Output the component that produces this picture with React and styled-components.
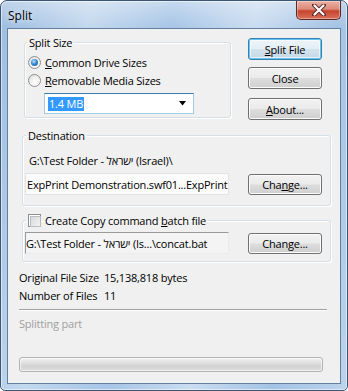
import React from 'react';
import styled, { createGlobalStyle, css } from 'styled-components';

const Global = createGlobalStyle`
  html, body { margin: 0; padding: 0; background: #ffffff; }
  body { font-family: "Open Sans", "DejaVu Sans", sans-serif; font-size: 11px; letter-spacing: -0.2px; color: #000; }
  * { box-sizing: border-box; }
`;

const Window = styled.div`
  width: 348px;
  height: 391px;
  display: flex;
  flex-direction: column;
  padding: 0 6px 6px 6px;
  border: 1px solid #3b5675;
  border-radius: 7px 7px 5px 5px;
  box-shadow: inset 0 0 0 1px rgba(255, 255, 255, 0.55);
  background:
    linear-gradient(180deg, rgba(255,255,255,0.35) 0px, rgba(255,255,255,0) 26px),
    linear-gradient(100deg, #9dbde0 0%, #c3d8ee 22%, #a7c5e6 42%, #cadcf0 62%, #a4c3e4 82%, #bcd3eb 100%);
  overflow: hidden;
`;

const TitleBar = styled.div`
  height: 27px;
  display: flex;
  align-items: flex-start;
  justify-content: space-between;
`;

const Title = styled.span`
  margin: 7px 0 0 1px;
  font-size: 12px;
  line-height: 15px;
  letter-spacing: 0;
  color: #000;
  text-shadow: 0 0 6px rgba(255,255,255,0.9);
`;

const CloseBtn = styled.div`
  width: 45px;
  height: 19px;
  border: 1px solid #5b2a26;
  border-top: none;
  border-radius: 0 0 5px 5px;
  background: linear-gradient(180deg, #ebb0a4 0%, #dc8b7a 45%, #c8432d 55%, #d9705a 100%);
  box-shadow: inset 0 0 0 1px rgba(255,255,255,0.35);
  display: flex;
  align-items: center;
  justify-content: center;
`;

const Client = styled.div`
  flex: 1;
  background: #f0f0f0;
  border: 1px solid #62809f;
  padding: 6px 8px 0 11px;
  display: flex;
  flex-direction: column;
`;

const TopRow = styled.div`
  display: flex;
  align-items: flex-start;
`;

const Group = styled.fieldset`
  margin: ${p => p.$mt || 0}px 0 0 ${p => p.$ml || 0}px;
  width: ${p => p.$w}px;
  height: ${p => p.$h}px;
  padding: 0 0 0 ${p => p.$pl || 0}px;
  min-width: 0;
  border: 1px solid #d5dfe5;
  border-radius: 3px;
  box-shadow: inset 1px 1px 0 #ffffff, 1px 1px 0 #ffffff;
`;

const Legend = styled.legend`
  margin-left: 1px;
  padding: 0 2px;
  height: 15px;
  line-height: 15px;
  font-size: 11px;
  display: flex;
  align-items: center;
`;

const RadioRow = styled.label`
  display: flex;
  align-items: center;
  height: 18px;
  margin-top: ${p => p.$mt || 0}px;
  padding-left: 2px;
  gap: 4px;
  line-height: 15px;
`;

const RadioCircle = styled.span`
  width: 13px;
  height: 13px;
  border-radius: 50%;
  border: 1px solid #8e8f8f;
  background: radial-gradient(circle at 65% 70%, #ffffff 0%, #f4f4f4 40%, #d8d8d8 100%);
  display: flex;
  align-items: center;
  justify-content: center;
  flex: none;
  ${p => p.$checked && css`
    &::after {
      content: "";
      width: 7px;
      height: 7px;
      border-radius: 50%;
      background: radial-gradient(circle at 40% 35%, #b9e2fb 0%, #3a8ad0 45%, #1c4f8f 100%);
    }
  `}
`;

const U = styled.span`
  text-decoration: underline;
  text-underline-offset: 1px;
`;

const Combo = styled.div`
  margin: 4px 0 0 18px;
  width: 150px;
  height: 21px;
  background: #ffffff;
  border: 1px solid #a4c9e3;
  border-top-color: #3d7bad;
  display: flex;
  align-items: center;
  justify-content: space-between;
  padding: 0 6px 0 3px;
`;

const Selected = styled.span`
  background: #3399ff;
  color: #ffffff;
  padding: 0 1px;
  line-height: 14px;
`;

const ButtonCol = styled.div`
  margin: 3px 0 0 17px;
  display: flex;
  flex-direction: column;
`;

const Button = styled.button`
  width: 74px;
  height: 22px;
  margin-top: ${p => p.$mt || 0}px;
  padding: 0;
  font: inherit;
  font-size: 11px;
  letter-spacing: -0.2px;
  color: #000;
  border: 1px solid #707070;
  border-radius: 3px;
  background: linear-gradient(180deg, #f2f2f2 0%, #ebebeb 48%, #dddddd 52%, #cfcfcf 100%);
  box-shadow: inset 0 0 0 1px #fbfbfb;
  ${p => p.$default && css`
    border-color: #3c7fb1;
    background: linear-gradient(180deg, #eef5fa 0%, #e4eef5 48%, #d3e2ed 52%, #c6d8e6 100%);
    box-shadow: inset 0 0 0 1px #63c6f1, inset 0 0 0 2px rgba(255,255,255,0.6);
  `}
`;

const PathText = styled.div`
  margin: 10px 0 0 4px;
  height: 15px;
  line-height: 15px;
  white-space: nowrap;
`;

const EditRow = styled.div`
  display: flex;
  align-items: flex-start;
  margin-top: ${p => p.$mt || 0}px;
`;

const Edit = styled.div`
  width: 204px;
  height: 22px;
  line-height: 15px;
  display: flex;
  align-items: center;
  white-space: nowrap;
  overflow: hidden;
  ${p => p.$sunken ? css`
    background: #f4f4f4;
    border: 1px solid #ebebeb;
    border-top-color: #9a9a9a;
    border-left-color: #9a9a9a;
    padding-left: 0px;
  ` : css`
    background: #fbfbfb;
    border: 1px solid #e3e3e3;
    padding-left: 1px;
  `}
`;

const SideButton = styled(Button)`
  margin-left: 19px;
  margin-top: 1px;
  height: 21px;
`;

const Check = styled.span`
  width: 13px;
  height: 13px;
  border: 1px solid #8e8f8f;
  background: #ffffff;
  padding: 1px;
  margin-right: 4px;
  flex: none;
  &::after {
    content: "";
    display: block;
    width: 9px;
    height: 9px;
    border: 1px solid #b9bcc0;
    background: linear-gradient(135deg, #d6d8da 0%, #f4f4f4 100%);
  }
`;

const InfoGrid = styled.div`
  margin-top: 7px;
  display: grid;
  grid-template-columns: 85px 1fr;
  grid-auto-rows: 18px;
  line-height: 18px;
`;

const Separator = styled.div`
  margin-top: 4px;
  width: 308px;
  height: 1px;
  background: #a0a0a0;
  box-shadow: 0 1px 0 #ffffff;
`;

const Status = styled.div`
  margin-top: 5px;
  line-height: 18px;
  color: #a0a0a0;
`;

const Progress = styled.div`
  margin-top: 24px;
  width: 304px;
  height: 15px;
  border: 1px solid #b2b2b2;
  border-radius: 3px;
  background: linear-gradient(180deg, #f3f3f3 0%, #e2e2e2 35%, #d2d2d2 60%, #dedede 100%);
  box-shadow: inset 0 0 0 1px rgba(255,255,255,0.6);
`;

export default function App() {
  return (
    <>
      <Global />
      <Window>
        <TitleBar>
          <Title>Split</Title>
          <CloseBtn>
            <svg width="14" height="12" viewBox="0 0 14 12">
              <path d="M2 1 L12 11 M12 1 L2 11" stroke="#5a2a26" strokeWidth="4" strokeLinecap="round" />
              <path d="M2.5 1.5 L11.5 10.5 M11.5 1.5 L2.5 10.5" stroke="#ffffff" strokeWidth="2.2" strokeLinecap="round" />
            </svg>
          </CloseBtn>
        </TitleBar>
        <Client>
          <TopRow>
            <Group $ml={5} $w={207} $h={83} $pl={1}>
              <Legend>Split Size</Legend>
              <RadioRow $mt={3}>
                <RadioCircle $checked />
                <span><U>C</U>ommon Drive Sizes</span>
              </RadioRow>
              <RadioRow>
                <RadioCircle />
                <span><U>R</U>emovable Media Sizes</span>
              </RadioRow>
              <Combo>
                <Selected>1.4 MB</Selected>
                <svg width="8" height="5" viewBox="0 0 8 5"><path d="M0 0 H7 L3.5 4.5 Z" fill="#000" /></svg>
              </Combo>
            </Group>
            <ButtonCol>
              <Button $default><U>S</U>plit File</Button>
              <Button $mt={7}>Close</Button>
              <Button $mt={9}><U>A</U>bout...</Button>
            </ButtonCol>
          </TopRow>

          <Group $mt={8} $ml={3} $w={309} $h={78} $pl={2}>
            <Legend>Destination</Legend>
            <PathText>G:\Test Folder - ישראל (Israel)\</PathText>
            <EditRow $mt={5}>
              <Edit>ExpPrint Demonstration.swf01...ExpPrint</Edit>
              <SideButton>Cha<U>n</U>ge...</SideButton>
            </EditRow>
          </Group>

          <Group $mt={7} $ml={3} $w={309} $h={49} $pl={2}>
            <Legend>
              <Check />
              <span>Create Copy command <U>b</U>atch file</span>
            </Legend>
            <EditRow $mt={4}>
              <Edit $sunken>G:\Test Folder - ישראל (Is...\concat.bat</Edit>
              <SideButton>Chan<U>g</U>e...</SideButton>
            </EditRow>
          </Group>

          <InfoGrid>
            <span>Original File Size</span>
            <span>15,138,818 bytes</span>
            <span>Number of Files</span>
            <span>11</span>
          </InfoGrid>
          <Separator />
          <Status>Splitting part</Status>
          <Progress />
        </Client>
      </Window>
    </>
  );
}
